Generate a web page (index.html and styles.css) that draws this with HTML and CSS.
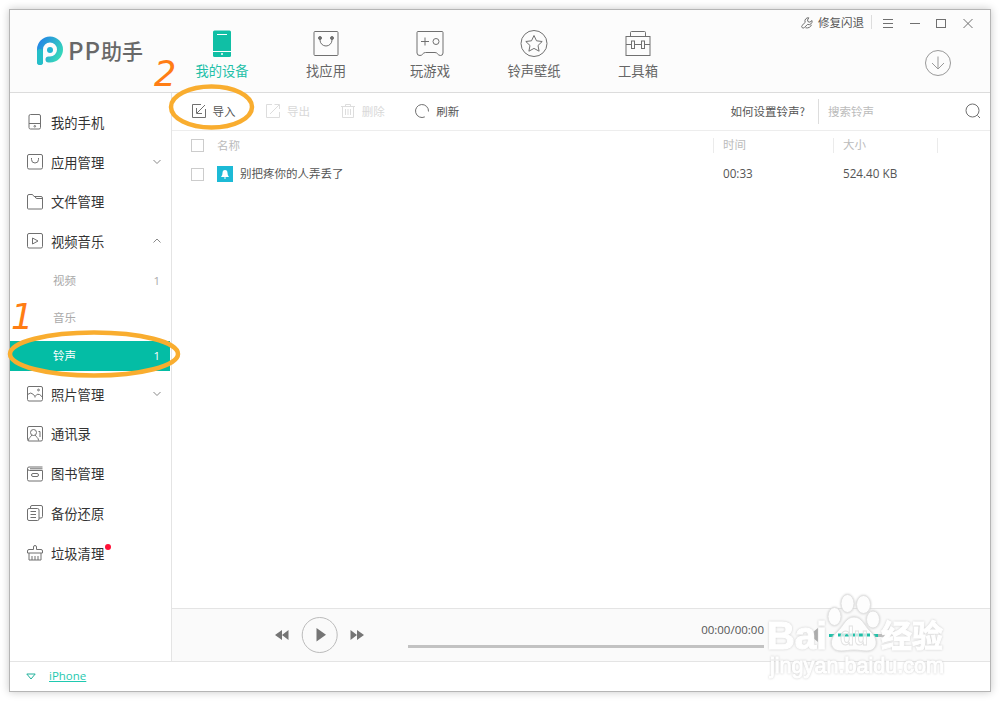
FILE: index.html
```html
<!DOCTYPE html>
<html lang="zh-CN">
<head>
    <meta charset="utf-8">
    <title>PP助手</title>
    <link rel="stylesheet" href="styles.css">
</head>
<body>
<div class="window">
    <header class="header">
        <div class="logo">
            <svg width="28" height="30" viewBox="0 0 28 30">
                <defs>
                    <linearGradient id="lg" x1="0" y1="0" x2="1" y2="0.7">
                        <stop offset="0" stop-color="#2385e6"/>
                        <stop offset="1" stop-color="#35d6bb"/>
                    </linearGradient>
                </defs>
                <path d="M4 26V13.500a10 10 0 1 1 10 10h-1.500" fill="none" stroke="url(#lg)" stroke-width="6" stroke-linecap="round"/>
                <path d="M4 16v10" stroke="#25bfc8" stroke-width="6" stroke-linecap="round"/>
                <circle cx="14" cy="14" r="3" fill="#22b6d4"/>
            </svg>
            <span class="logo-pp">PP</span><span class="logo-name">助手</span>
        </div>
        <nav class="tabs">
            <a class="tab active">
                <svg width="28" height="28" viewBox="0 0 28 28">
                    <rect x="5" y="0.500" width="18" height="26.500" rx="1.500" fill="#10bfa5"/>
                    <path d="M9 4.500h10M5 21.500h18" stroke="#fff"/>
                    <circle cx="14" cy="24" r="1" fill="#fff"/>
                </svg>
                <span>我的设备</span>
            </a>
            <a class="tab">
                <svg width="28" height="28" viewBox="0 0 28 28">
                    <rect x="2" y="1.500" width="24" height="24" rx="1"/>
                    <path d="M8 8v2a6 6 0 0 0 12 0V8"/>
                    <circle cx="8" cy="8" r="1.500" class="solid"/><circle cx="20" cy="8" r="1.500" class="solid"/>
                </svg>
                <span>找应用</span>
            </a>
            <a class="tab">
                <svg width="28" height="28" viewBox="0 0 28 28">
                    <path d="M2 1.500h24q1 0 1 1V23q0 2.500-2.500 2.500c-3 0-2.500-3-5.500-3H9.500c-3 0-2.500 3-5.500 3q-3 0-3-2.500V2.500q0-1 1-1z"/>
                    <path d="M5 11.500h8M9 7.500v8"/><circle cx="20" cy="11.500" r="3"/>
                </svg>
                <span>玩游戏</span>
            </a>
            <a class="tab">
                <svg width="28" height="28" viewBox="0 0 28 28">
                    <circle cx="14" cy="13.500" r="13"/>
                    <path d="M14 5.500l2.500 5.300 5.700.7-4.200 4 1.100 5.700-5.100-2.800-5.100 2.800 1.100-5.700-4.200-4 5.700-.7z"/>
                </svg>
                <span>铃声壁纸</span>
            </a>
            <a class="tab">
                <svg width="28" height="28" viewBox="0 0 28 28">
                    <rect x="2" y="6.500" width="24" height="19"/>
                    <path d="M6.500 6.500v-4q0-1 1-1h13q1 0 1 1v4M2 14.500h5.500M10.500 14.500h7M20.500 14.500H26"/>
                    <rect x="7.500" y="11" width="3" height="7.500"/><rect x="17.500" y="11" width="3" height="7.500"/>
                </svg>
                <span>工具箱</span>
            </a>
        </nav>
        <div class="header-right">
            <div class="controls">
                <svg class="wrench" width="12" height="12" viewBox="0 0 12 12"><path d="M7.800.8a3.300 3.300 0 0 0-3.600 4.600L1 8.500q-.8 1.200.2 2.200 1 .8 2.100-.1l3.200-3.200a3.300 3.300 0 0 0 4.500-3.900L8.900 5.200 7 4.700 6.500 3zM4.500 10.800c3 .6 5.200-.7 6-3"/></svg>
                <span class="fix">修复闪退</span>
                <svg width="106" height="16" viewBox="0 0 106 16">
                    <path class="sep" d="M6.500 0v14"/>
                    <path d="M18 4.500h10M18 8.500h10M18 12.500h10M45 8.500h10"/>
                    <rect x="71.500" y="4.500" width="9" height="8"/>
                    <path d="M98.500 4l9 9M107.500 4l-9 9"/>
                </svg>
            </div>
            <svg class="download" width="28" height="28" viewBox="0 0 28 28">
                <circle cx="14" cy="14" r="12.500"/><path d="M14 7.500v12M8 14l6 6 6-6"/>
            </svg>
        </div>
    </header>

    <div class="main">
        <aside class="sidebar">
            <div class="item">
                <svg width="16" height="16" viewBox="0 0 16 16"><rect x="2" y=".5" width="11.500" height="14.500" rx="1.500"/><path d="M2 9.500h11.500"/><circle cx="7.800" cy="12.300" r=".8"/></svg>
                <span>我的手机</span>
            </div>
            <div class="item">
                <svg width="16" height="16" viewBox="0 0 16 16"><rect x=".5" y=".5" width="15" height="14.500" rx="1.500"/><path d="M4.500 4v1.500a3.500 3.500 0 0 0 7 0V4"/></svg>
                <span>应用管理</span>
                <svg class="arrow" width="8" height="8" viewBox="0 0 8 8"><path d="M.5 2L4 5.500 7.500 2"/></svg>
            </div>
            <div class="item">
                <svg width="16" height="16" viewBox="0 0 16 16"><path d="M.5 14V2q0-1.500 1.500-1.500h3.500L7 2.500h7q1.500 0 1.500 1.500v10q0 1-1 1h-13q-1 0-1-1zM8 2.500q.5 2 2 2h5.500"/></svg>
                <span>文件管理</span>
            </div>
            <div class="item">
                <svg width="16" height="16" viewBox="0 0 16 16"><rect x=".5" y=".5" width="15" height="14.500" rx="1.500"/><path d="M5.500 5v6L11 8z"/></svg>
                <span>视频音乐</span>
                <svg class="arrow" width="8" height="8" viewBox="0 0 8 8"><path d="M.5 5.500L4 2l3.500 3.500"/></svg>
            </div>
            <div class="sub"><span>视频</span><b>1</b></div>
            <div class="sub"><span>音乐</span></div>
            <div class="sub selected"><span>铃声</span><b>1</b></div>
            <div class="item">
                <svg width="16" height="16" viewBox="0 0 16 16"><rect x=".5" y=".5" width="15" height="14.500" rx="1.500"/><path d="M.5 8.500q3.500-3 6 0t1.500 3M8 10.500q2-3.500 4.500-2t3 3"/><circle cx="11.500" cy="4" r=".9"/></svg>
                <span>照片管理</span>
                <svg class="arrow" width="8" height="8" viewBox="0 0 8 8"><path d="M.5 2L4 5.500 7.500 2"/></svg>
            </div>
            <div class="item">
                <svg width="16" height="16" viewBox="0 0 16 16"><rect x=".5" y=".5" width="15" height="14.500" rx="1.500"/><circle cx="6.500" cy="6.500" r="3"/><path d="M1.500 14.500c0-3 2-3 3.500-5.500M8 9c1.500 2.500 3.500 2.500 3.500 5.500M11.500 5.500h1.500V11"/></svg>
                <span>通讯录</span>
            </div>
            <div class="item">
                <svg width="16" height="16" viewBox="0 0 16 16"><path d="M15.500 1H2Q.5 1 .5 2.500v11Q.5 15 2 15h12q1.500 0 1.500-1.500v-9H2.500Q.5 4.500.5 2.500M3 2.800h12.500"/><rect x="4.500" y="7.500" width="7" height="3" rx="1.500"/></svg>
                <span>图书管理</span>
            </div>
            <div class="item">
                <svg width="16" height="16" viewBox="0 0 16 16"><rect x=".5" y="3.500" width="11.500" height="12" rx="1.500"/><path d="M3.500 3.500V2q0-1.500 1.500-1.500h9q1.500 0 1.500 1.500v9.500q0 1.500-1.500 1.500h-2M3.500 6.500H9M3.500 9.500H9M3.500 12.500H9"/></svg>
                <span>备份还原</span>
            </div>
            <div class="item">
                <svg width="16" height="16" viewBox="0 0 16 16"><path d="M.5 8V6Q.5 4.500 2 4.500h4.500V2q0-1.500 1.500-1.500T9.500 2v2.500H14q1.500 0 1.500 1.500v2zM2 8v7h12V8M5 11v4M8 11v4M11 11v4"/></svg>
                <span class="clean">垃圾清理</span>
            </div>
        </aside>

        <section class="content">
            <div class="toolbar">
                <a class="tool">
                    <svg width="14" height="14" viewBox="0 0 14 14"><path d="M9 .5H.5v13h13V5M13 1L5 9M4.500 4v5.500H10"/></svg>
                    <span>导入</span>
                </a>
                <a class="tool disabled">
                    <svg width="14" height="14" viewBox="0 0 14 14"><path d="M6 .5H.5v13h13V8M4 10L13 1M8.500.5h5V5"/></svg>
                    <span>导出</span>
                </a>
                <a class="tool disabled">
                    <svg width="14" height="14" viewBox="0 0 14 14"><path d="M0 2.500h14M4.500 2.500v-2h5v2M1.500 2.500v11h11v-11M4.500 5v6M7 5v6M9.500 5v6"/></svg>
                    <span>删除</span>
                </a>
                <a class="tool">
                    <svg width="14" height="14" viewBox="0 0 14 14"><path d="M13.500 7.500A6.500 6.500 0 1 0 9.800 12.900"/></svg>
                    <span>刷新</span>
                </a>
                <span class="help">如何设置铃声?</span>
                <div class="search">
                    <span>搜索铃声</span>
                    <svg width="16" height="16" viewBox="0 0 16 16"><circle cx="7.500" cy="7.500" r="6.500"/><path d="M12.500 12.500l2.500 2.500"/></svg>
                </div>
            </div>

            <div class="row thead">
                <i class="check"></i>
                <span class="name">名称</span>
                <span class="cell time">时间</span>
                <span class="cell size">大小</span>
                <span class="cell"></span>
            </div>
            <div class="row">
                <i class="check"></i>
                <svg class="bell" width="16" height="16" viewBox="0 0 16 16"><rect width="16" height="16" fill="#1cbad6"/><path d="M4 11q1.500-1.200 1.500-4Q5.500 4 8 4t2.500 3q0 2.800 1.500 4zM7 11.500h2v1H7z" fill="#fff"/></svg>
                <span class="name">别把疼你的人弄丢了</span>
                <span class="cell time num">00:33</span>
                <span class="cell size num">524.40 KB</span>
                <span class="cell"></span>
            </div>

            <div class="player">
                <svg class="buttons" width="90" height="38" viewBox="0 0 90 38">
                    <path d="M7 14v10L0 19zM13.500 14v10L7 19zM75.500 14v10l6.500-5zM82 14v10l7-5zM41.500 12v13.500l9.500-6.750z"/>
                    <circle cx="44.700" cy="19" r="17.500"/>
                </svg>
                <div class="progress">
                    <span>00:00/00:00</span>
                    <div class="track"></div>
                </div>
                <svg class="speaker" width="10" height="14" viewBox="0 0 10 14"><path d="M0 4.500h2.500v5H0zM3.500 4.500L9 0v14L3.500 9.500z"/></svg>
                <div class="volume"></div>
            </div>
        </section>
    </div>

    <footer class="footer">
        <svg width="10" height="8" viewBox="0 0 10 8"><path d="M.8 1h8.400L5 6z"/></svg>
        <a>iPhone</a>
    </footer>
</div>

<!-- tutorial marks and watermark lie over the window -->
<svg class="marks" width="1000" height="701" viewBox="0 0 1000 701">
    <ellipse cx="211.500" cy="107" rx="40.500" ry="20.500"/>
    <ellipse cx="94" cy="354" rx="84" ry="21.500"/>
    <text x="154" y="86">2</text>
    <text x="11" y="329">1</text>
</svg>
<svg class="watermark" width="200" height="100" viewBox="760 590 200 100">
    <g class="paw">
        <ellipse cx="834.500" cy="616.500" rx="6.500" ry="9"/>
        <ellipse cx="847.500" cy="603.500" rx="6.500" ry="9"/>
        <ellipse cx="863.500" cy="604.500" rx="7" ry="9"/>
        <ellipse cx="873" cy="619.500" rx="6.500" ry="8.500"/>
        <path d="M854 617c8 0 10 8 16 14 10 9 7 20-3 20-5 0-8-1-13-1s-8 1-13 1c-11 0-13-11-4-19 7-7 9-15 17-15z"/>
        <path class="level" d="M838 635h32"/>
    </g>
    <text class="wm-bai" x="767" y="649" textLength="60" lengthAdjust="spacingAndGlyphs">Bai</text>
    <text class="wm-du" x="840" y="645" textLength="28" lengthAdjust="spacingAndGlyphs">du</text>
    <text class="wm-cn" x="881" y="647" textLength="62">经验</text>
    <text class="wm-url" x="770" y="673" textLength="174" lengthAdjust="spacingAndGlyphs">jingyan.baidu.com</text>
</svg>
</body>
</html>
```
FILE: styles.css
```css
* {
    box-sizing: border-box;
}
body {
    margin: 0;
    background: #fff;
    font-family: "Noto Sans CJK SC", sans-serif;
    font-size: 11.5px;
    color: #555;
    overflow: hidden;
}
svg {
    display: block;
    flex: none;
    fill: none;
    stroke: #707070;
    overflow: visible;
}
.window {
    display: flex;
    flex-direction: column;
    width: 982px;
    height: 683px;
    margin: 9px;
    border: 1px solid #b5b5b5;
    box-shadow: 0 0 8px rgba(0, 0, 0, 0.22);
    background: #fff;
}

/* header */
.header {
    display: flex;
    height: 83px;
    background: #fcfcfc;
    border-bottom: 1px solid #dcdcdc;
}
.logo {
    display: flex;
    align-items: center;
    width: 160px;
    height: 82px;
    padding-left: 26px;
    color: #686868;
    line-height: 30px;
}
.logo svg {
    stroke: none;
}
.logo span {
    margin-top: -3px;
}
.logo .logo-pp {
    margin-left: 4px;
    font-size: 24px;
    font-weight: 500;
    letter-spacing: 1px;
}
.logo-name {
    font-size: 21px;
    font-weight: 500;
}
.tabs {
    display: flex;
}
.tab {
    display: flex;
    flex-direction: column;
    align-items: center;
    width: 104px;
    padding-top: 20px;
    font-size: 13.3px;
    line-height: 20px;
    color: #666;
}
.tab span {
    margin-top: 3px;
}
.tab.active {
    color: #1fc0a8;
}
.tab.active svg {
    stroke: none;
}
.solid {
    fill: #707070;
}
.header-right {
    flex: 1;
    display: flex;
    flex-direction: column;
    align-items: flex-end;
}
.controls {
    display: flex;
    align-items: center;
    height: 24px;
    padding-right: 19px;
}
.controls svg {
    margin-top: 2px;
}
.wrench {
    margin-right: 5px;
}
.fix {
    margin-right: 1px;
}
.sep {
    stroke: #ddd;
}
.download {
    margin: 15px 38px 0 0;
    stroke: #999;
}

/* left menu */
.main {
    flex: 1;
    display: flex;
    min-height: 0;
}
.sidebar {
    width: 162px;
    padding-top: 9.5px;
    border-right: 1px solid #e4e4e4;
}
.item {
    display: flex;
    align-items: center;
    height: 39.7px;
    padding: 0 10px 0 17px;
    font-size: 13.3px;
    color: #333;
}
.item span {
    margin-left: 8px;
}
.arrow {
    margin-left: auto;
    stroke: #888;
}
.sub {
    display: flex;
    align-items: center;
    justify-content: space-between;
    height: 30px;
    margin: 3.9px 0;
    padding: 0 11px 0 43px;
    color: #aaa;
}
.sub span {
    margin-top: -1px;
}
.sub + .sub {
    margin-top: 7.7px;
}
.sub b {
    font-family: "Open Sans", sans-serif;
    font-weight: normal;
}
.sub.selected {
    margin-right: 1px;
    padding-right: 10px;
    background: #04bda5;
    color: #fff;
}
.clean {
    position: relative;
}
.clean::after {
    content: "";
    position: absolute;
    top: 0;
    right: -7px;
    width: 6px;
    height: 6px;
    border-radius: 50%;
    background: #ff1038;
}

/* ringtone list */
.content {
    flex: 1;
    display: flex;
    flex-direction: column;
}
.toolbar {
    display: flex;
    align-items: center;
    height: 38px;
    padding-left: 19.5px;
    padding-bottom: 1px;
    border-bottom: 1px solid #ededed;
}
.tool {
    display: flex;
    align-items: center;
    width: 74.6px;
}
.tool span {
    margin: -1px 0 0 7px;
}
.tool.disabled {
    color: #d8d8d8;
}
.tool.disabled svg {
    stroke: #ddd;
}
.help {
    margin: -1px 13px 0 auto;
}
.search {
    display: flex;
    align-items: center;
    justify-content: space-between;
    width: 172px;
    height: 25px;
    padding: 0 9px;
    border-left: 1px solid #ddd;
    color: #bbb;
}
.row {
    display: flex;
    align-items: center;
    height: 28px;
    padding-left: 19px;
}
.row .name {
    flex: 1;
    margin: -2px 0 0 13px;
}
.bell {
    margin-left: 13px;
    stroke: none;
}
.row .bell + .name {
    margin-left: 7px;
}
.thead {
    height: 29px;
    color: #bbb;
}
.check {
    width: 13px;
    height: 13px;
    border: 1px solid #ccc;
}
.cell {
    width: 53px;
    height: 15px;
    line-height: 13px;
    padding-left: 9px;
    border-left: 1px solid transparent;
}
.thead .cell {
    border-color: #ebebeb;
}
.cell.time {
    width: 120px;
}
.cell.size {
    width: 104px;
}
.num {
    font-family: "Open Sans", sans-serif;
    font-size: 11.7px;
}

/* player bar */
.player {
    display: flex;
    align-items: center;
    height: 53px;
    margin-top: auto;
    padding-left: 103px;
    background: #fafafa;
    border-top: 1px solid #e4e4e4;
}
.buttons {
    fill: #757575;
    stroke: none;
}
.buttons circle {
    fill: none;
    stroke: #bbb;
}
.progress {
    width: 356px;
    margin-left: 43px;
    font-family: "Open Sans", sans-serif;
    line-height: 14px;
    text-align: right;
}
.track {
    height: 3px;
    margin-top: 8px;
    background: #c2c2c2;
}
.speaker {
    margin-left: 45px;
    fill: #aaa;
    stroke: none;
}
.volume {
    width: 58px;
    height: 3px;
    margin-left: 10px;
    background: linear-gradient(to right, #1fc0a8 49px, #bbb 49px);
}
.footer {
    display: flex;
    align-items: center;
    height: 30px;
    padding-left: 16px;
    border-top: 1px solid #e4e4e4;
}
.footer svg {
    stroke: #1fb09a;
}
.footer a {
    margin: -2px 0 0 13px;
    font-family: "Open Sans", sans-serif;
    color: #1fc9b0;
    text-decoration: underline;
}

.marks {
    position: absolute;
    top: 0;
    left: 0;
}
.marks ellipse {
    stroke: #f9ad2f;
    stroke-width: 4.5;
}
.marks text {
    font: italic 35px "DejaVu Sans", sans-serif;
    fill: #ff7d14;
    stroke: none;
}
.watermark {
    position: absolute;
    top: 590px;
    left: 760px;
    filter: drop-shadow(0 0 1px #ccc);
}
.paw {
    fill: #fdfdfd;
    stroke: #e2e2e2;
}
.paw .level {
    stroke: #1fc0a8;
    stroke-width: 3px;
}
.watermark text {
    font-family: "Liberation Sans", sans-serif;
    fill: #fff;
    stroke: #fff;
}
.wm-bai {
    font-size: 39px;
    font-weight: bold;
}
.watermark .wm-du {
    fill: rgba(255, 255, 255, 0.7);
    stroke: #e2e2e2;
    font-size: 26px;
    font-weight: bold;
}
.watermark .wm-cn {
    font-family: "Noto Sans CJK SC", sans-serif;
    font-size: 31px;
    font-weight: bold;
}
.wm-url {
    font-size: 22px;
}
```
